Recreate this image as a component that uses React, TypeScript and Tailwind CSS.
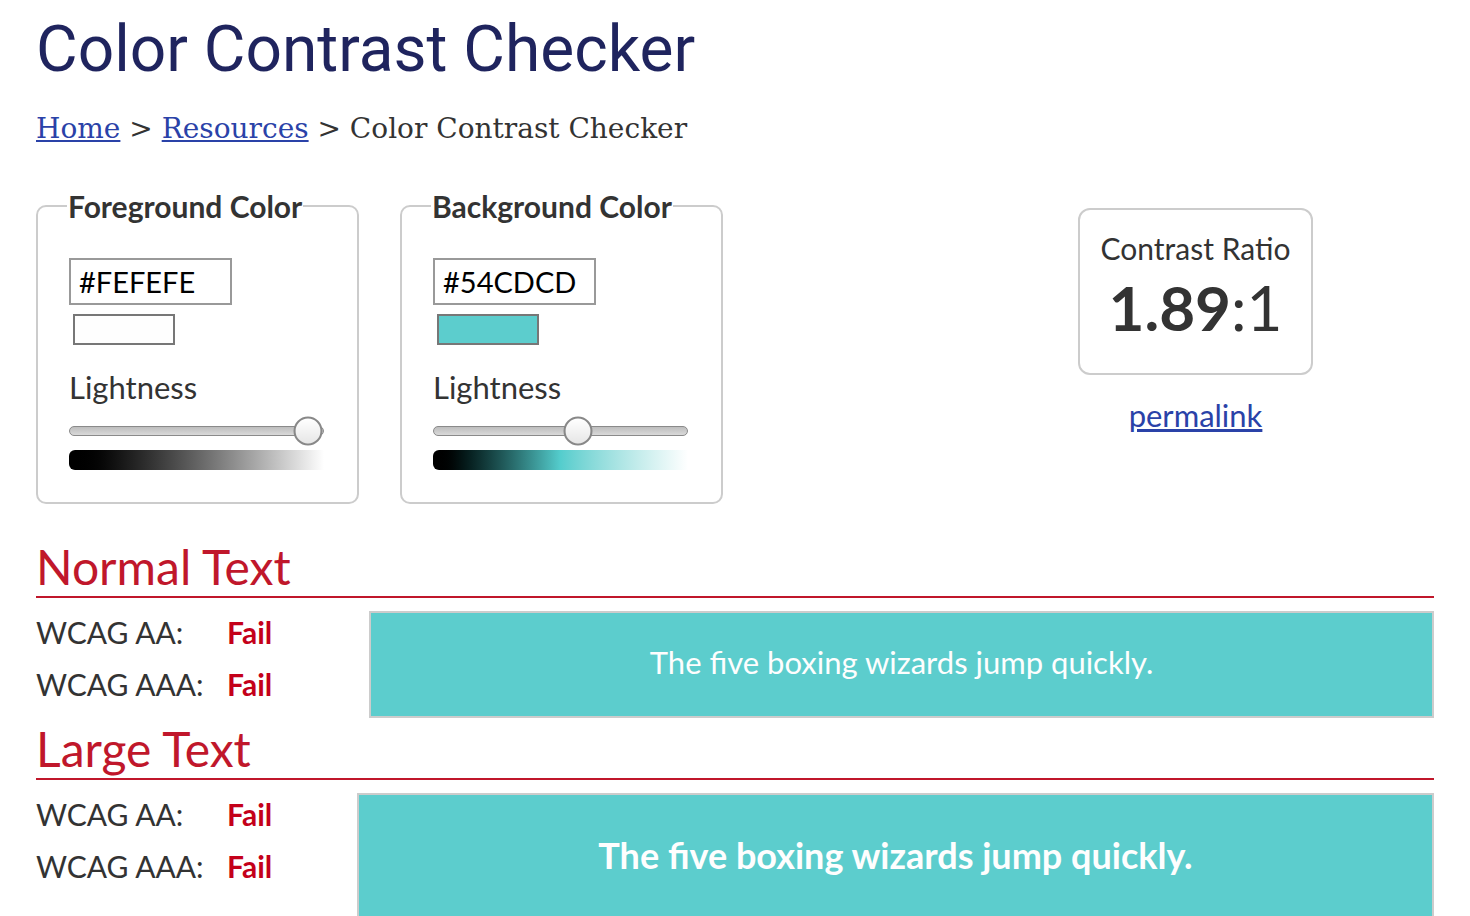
import React from "react";

const body = { fontFamily: "Lato, 'Noto Sans', sans-serif" };

function Slider({ pos }: { pos: number }) {
  return (
    <div className="relative mt-[19px] h-[10px] w-[255px] rounded-full border border-[#8a8a8a] bg-gradient-to-b from-[#bdbdbd] to-[#d9d9d9]">
      <div
        className="absolute top-1/2 h-[29px] w-[29px] -translate-x-1/2 -translate-y-1/2 rounded-full border-2 border-[#888] bg-gradient-to-b from-white to-[#e6e6e6]"
        style={{ left: `${pos}%` }}
      />
    </div>
  );
}

function ColorPanel({
  legend,
  hex,
  swatch,
  gradient,
  pos,
}: {
  legend: string;
  hex: string;
  swatch: string;
  gradient: string;
  pos: number;
}) {
  return (
    <fieldset className="w-[323px] rounded-[10px] border-2 border-[#cccccc] px-[31px] pb-[32px] pt-[34px]">
      <legend className="-ml-[2px] px-[1px] text-[30px] font-bold leading-[36px] text-[#333]">{legend}</legend>
      <div className="flex h-[47px] w-[163px] items-center border-2 border-[#999] px-[8px] text-[29px] text-black">
        {hex}
      </div>
      <div className={`ml-[4px] mt-[9px] h-[31px] w-[102px] border-2 border-[#777] ${swatch}`} />
      <div className="mt-[22px] text-[31px] leading-[40px] text-[#333]">Lightness</div>
      <Slider pos={pos} />
      <div className={`mt-[14px] h-[20px] w-[255px] rounded-l-md ${gradient}`} />
    </fieldset>
  );
}

function ResultRows() {
  return (
    <div className="w-[300px] shrink-0 text-[30px] leading-[52px] text-[#333]">
      <div className="flex">
        <span className="w-[191px]">WCAG AA:</span>
        <span className="font-bold text-[#c4001a]">Fail</span>
      </div>
      <div className="flex">
        <span className="w-[191px]">WCAG AAA:</span>
        <span className="font-bold text-[#c4001a]">Fail</span>
      </div>
    </div>
  );
}

export default function App() {
  return (
    <div className="min-h-[916px] overflow-hidden bg-white px-[36px]" style={body}>
      <h1
        className="pt-[10px] text-[64px] font-normal leading-[80px] text-[#1f245e]"
        style={{ fontFamily: "Roboto, sans-serif" }}
      >
        Color Contrast Checker
      </h1>
      <nav className="mt-[19px] text-[28px] leading-[40px] text-[#333]" style={{ fontFamily: "'DejaVu Serif', serif" }}>
        <a href="#" className="text-[#2a42a8] underline">Home</a> &gt;{" "}
        <a href="#" className="text-[#2a42a8] underline">Resources</a> &gt; Color Contrast Checker
      </nav>

      <div className="mt-[39px] flex items-start">
        <ColorPanel
          legend="Foreground Color"
          hex="#FEFEFE"
          swatch="bg-[#fefefe]"
          gradient="bg-gradient-to-r from-black to-white"
          pos={94}
        />
        <div className="ml-[41px]">
          <ColorPanel
            legend="Background Color"
            hex="#54CDCD"
            swatch="bg-[#5ccdcd]"
            gradient="bg-gradient-to-r from-black via-[#54cdcd] to-white"
            pos={57}
          />
        </div>
        <div className="ml-[355px] mt-[20px] flex flex-col items-center">
          <div className="flex h-[167px] w-[235px] flex-col items-center rounded-xl border-2 border-[#cccccc] pt-[18px] text-[#333]">
            <div className="text-[30px] leading-[40px]">Contrast Ratio</div>
            <div className="mt-[4px] text-[62px] leading-[70px]">
              <span className="font-bold">1.89</span>:1
            </div>
          </div>
          <a href="#" className="mt-[20px] text-[31px] leading-[40px] text-[#2a42a8] underline">
            permalink
          </a>
        </div>
      </div>

      <h2 className="mt-[34px] border-b-2 border-[#c0172b] text-[48px] leading-[58px] text-[#c0172b]">Normal Text</h2>
      <div className="mt-[13px] flex items-start">
        <div className="-mt-[5px]">
          <ResultRows />
        </div>
        <div className="ml-[33px] flex h-[107px] flex-1 items-center justify-center border-2 border-[#cccccc] bg-[#5ccdcd] pb-[4px] text-[31px] text-[#fefefe]">
          The five boxing wizards jump quickly.
        </div>
      </div>

      <h2 className="mt-[2px] border-b-2 border-[#c0172b] text-[48px] leading-[58px] text-[#c0172b]">Large Text</h2>
      <div className="mt-[13px] flex items-start">
        <div className="-mt-[5px]">
          <ResultRows />
        </div>
        <div className="ml-[21px] flex h-[140px] flex-1 items-start justify-center border-2 border-[#cccccc] bg-[#5ccdcd] pt-[36px] text-[36px] font-bold leading-[48px] text-[#fefefe]">
          The five boxing wizards jump quickly.
        </div>
      </div>
    </div>
  );
}
